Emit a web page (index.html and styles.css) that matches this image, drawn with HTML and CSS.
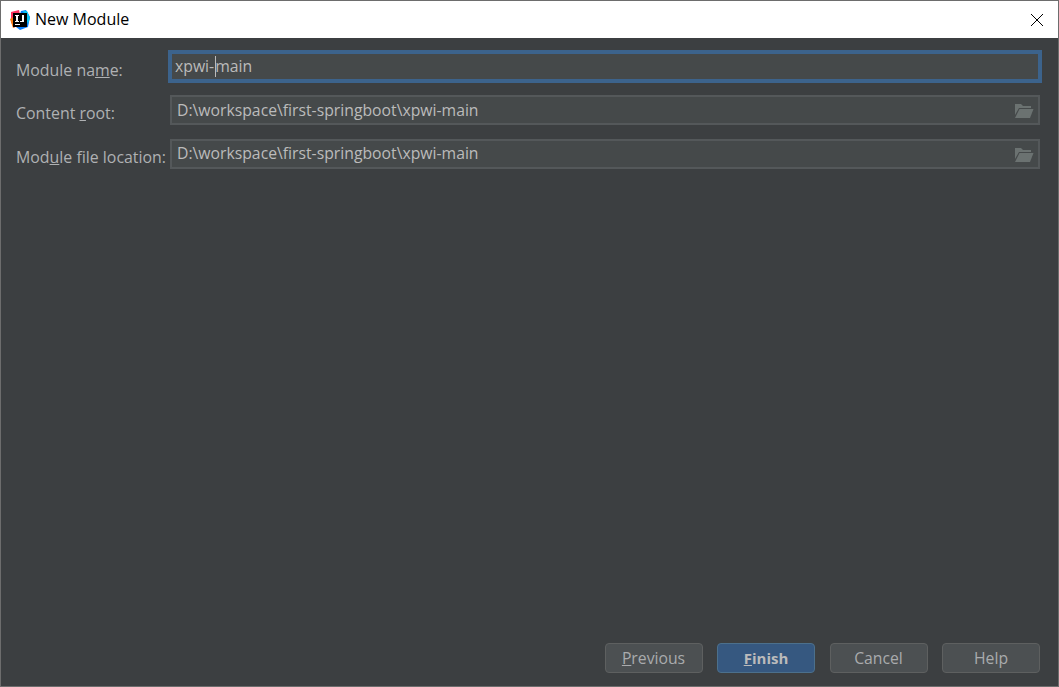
FILE: index.html
```html
<!DOCTYPE html>
<html lang="en">
<head>
  <meta charset="UTF-8" />
  <title>New Module</title>
  <link rel="stylesheet" href="styles.css">
</head>
<body>
  <div class="window">
    <div class="titlebar">
      <svg class="app-icon" width="20" height="20" viewBox="0 0 20 20">
        <polygon points="1,2 9,0 11,9 4,18 1,12" fill="#fe315d"/>
        <polygon points="0,9 5,6 8,15 3,18" fill="#f97a12"/>
        <polygon points="11,1 16,0 20,7 18,17 10,20 6,17" fill="#087cfa"/>
        <polygon points="13,1 17,1 20,8 18,14" fill="#07c3f2"/>
        <rect x="3" y="3" width="14" height="14" fill="#000"/>
        <rect x="5" y="14" width="5" height="1" fill="#fff"/>
        <rect x="5" y="5" width="4" height="1" fill="#fff"/>
        <rect x="6" y="5" width="2" height="7" fill="#fff"/>
        <rect x="5" y="11" width="4" height="1" fill="#fff"/>
        <rect x="12" y="5" width="2" height="7" fill="#fff"/>
        <rect x="10" y="11" width="4" height="1" fill="#fff"/>
      </svg>
      <span class="title">New Module</span>
      <svg class="close" width="14" height="14" viewBox="0 0 14 14">
        <path d="M1 1 L13 13 M13 1 L1 13" stroke="#000" stroke-width="1" fill="none"/>
      </svg>
    </div>

    <div class="content">
      <div class="form">
        <label class="label">Module na<u>m</u>e:</label>
        <div class="field field-focus"><span>xpwi-</span><i class="caret"></i><span>main</span></div>

        <label class="label">Content <u>r</u>oot:</label>
        <div class="field field-mid">
          <span>D:\workspace\first-springboot\xpwi-main</span>
          <svg class="folder" width="20" height="16" viewBox="0 0 20 16">
            <path d="M1 1 H7 L9 3 H17 V5 H5 L1 12 Z" fill="#6b7271"/>
            <path d="M5.5 6 H19.5 L16 15 H1 Z" fill="#6b7271"/>
          </svg>
        </div>

        <label class="label">Mod<u>u</u>le file location:</label>
        <div class="field">
          <span>D:\workspace\first-springboot\xpwi-main</span>
          <svg class="folder" width="20" height="16" viewBox="0 0 20 16">
            <path d="M1 1 H7 L9 3 H17 V5 H5 L1 12 Z" fill="#6b7271"/>
            <path d="M5.5 6 H19.5 L16 15 H1 Z" fill="#6b7271"/>
          </svg>
        </div>
      </div>

      <div class="buttons">
        <button class="btn"><u>P</u>revious</button>
        <button class="btn btn-primary"><u>F</u>inish</button>
        <button class="btn">Cancel</button>
        <button class="btn">Help</button>
      </div>
    </div>
  </div>
</body>
</html>
```

FILE: styles.css
```css
html, body {
  margin: 0;
  padding: 0;
  height: 100%;
}

body {
  font-family: "Open Sans", "Noto Sans", sans-serif;
  overflow: hidden;
}

.window {
  box-sizing: border-box;
  width: 1059px;
  height: 687px;
  border: 1px solid #6d6d6d;
  display: flex;
  flex-direction: column;
  background: #3c3f41;
}

.titlebar {
  height: 37px;
  background: #fff;
  display: flex;
  align-items: center;
  padding: 0 14px 0 9px;
  flex-shrink: 0;
}

.app-icon {
  margin-right: 5px;
}

.title {
  font-size: 16px;
  color: #000;
  flex: 1;
  padding-bottom: 2px;
}

.content {
  flex: 1;
  display: flex;
  flex-direction: column;
  justify-content: space-between;
  padding: 14px 18px 13px 15px;
}

.form {
  display: grid;
  grid-template-columns: 154px 1fr;
  grid-template-rows: 29px 30px 30px;
  row-gap: 14px;
}

.label {
  font-size: 15.9px;
  color: #afb1b3;
  white-space: nowrap;
  line-height: 30px;
  padding-top: 3px;
}

.field {
  box-sizing: border-box;
  border: 2px solid #54585a;
  background: #45494a;
  color: #bbbbbb;
  font-size: 15.75px;
  display: flex;
  align-items: center;
  padding: 0 5px 2px;
  position: relative;
  white-space: nowrap;
}

.field-mid {
  padding-bottom: 0;
}

.field-focus {
  border-color: #3c638c;
  box-shadow: 0 0 0 2px #3c638c;
  padding: 0 3px 1px;
}

.caret {
  width: 1px;
  height: 21px;
  margin: 0 -1px 0 1px;
  background: #bbbbbb;
}

.folder {
  position: absolute;
  right: 4px;
  top: 6px;
}

.buttons {
  display: flex;
  justify-content: flex-end;
  gap: 14.5px;
}

.btn {
  width: 98px;
  height: 30px;
  box-sizing: border-box;
  border: 1px solid #5e6060;
  border-radius: 4px;
  background: #4c5052;
  color: #a9abad;
  font-family: inherit;
  font-size: 15.75px;
  padding: 0;
}

.btn-primary {
  background: #365880;
  border-color: #4c708c;
  color: #bbbbbb;
  font-size: 15px;
  font-weight: 700;
}
```
